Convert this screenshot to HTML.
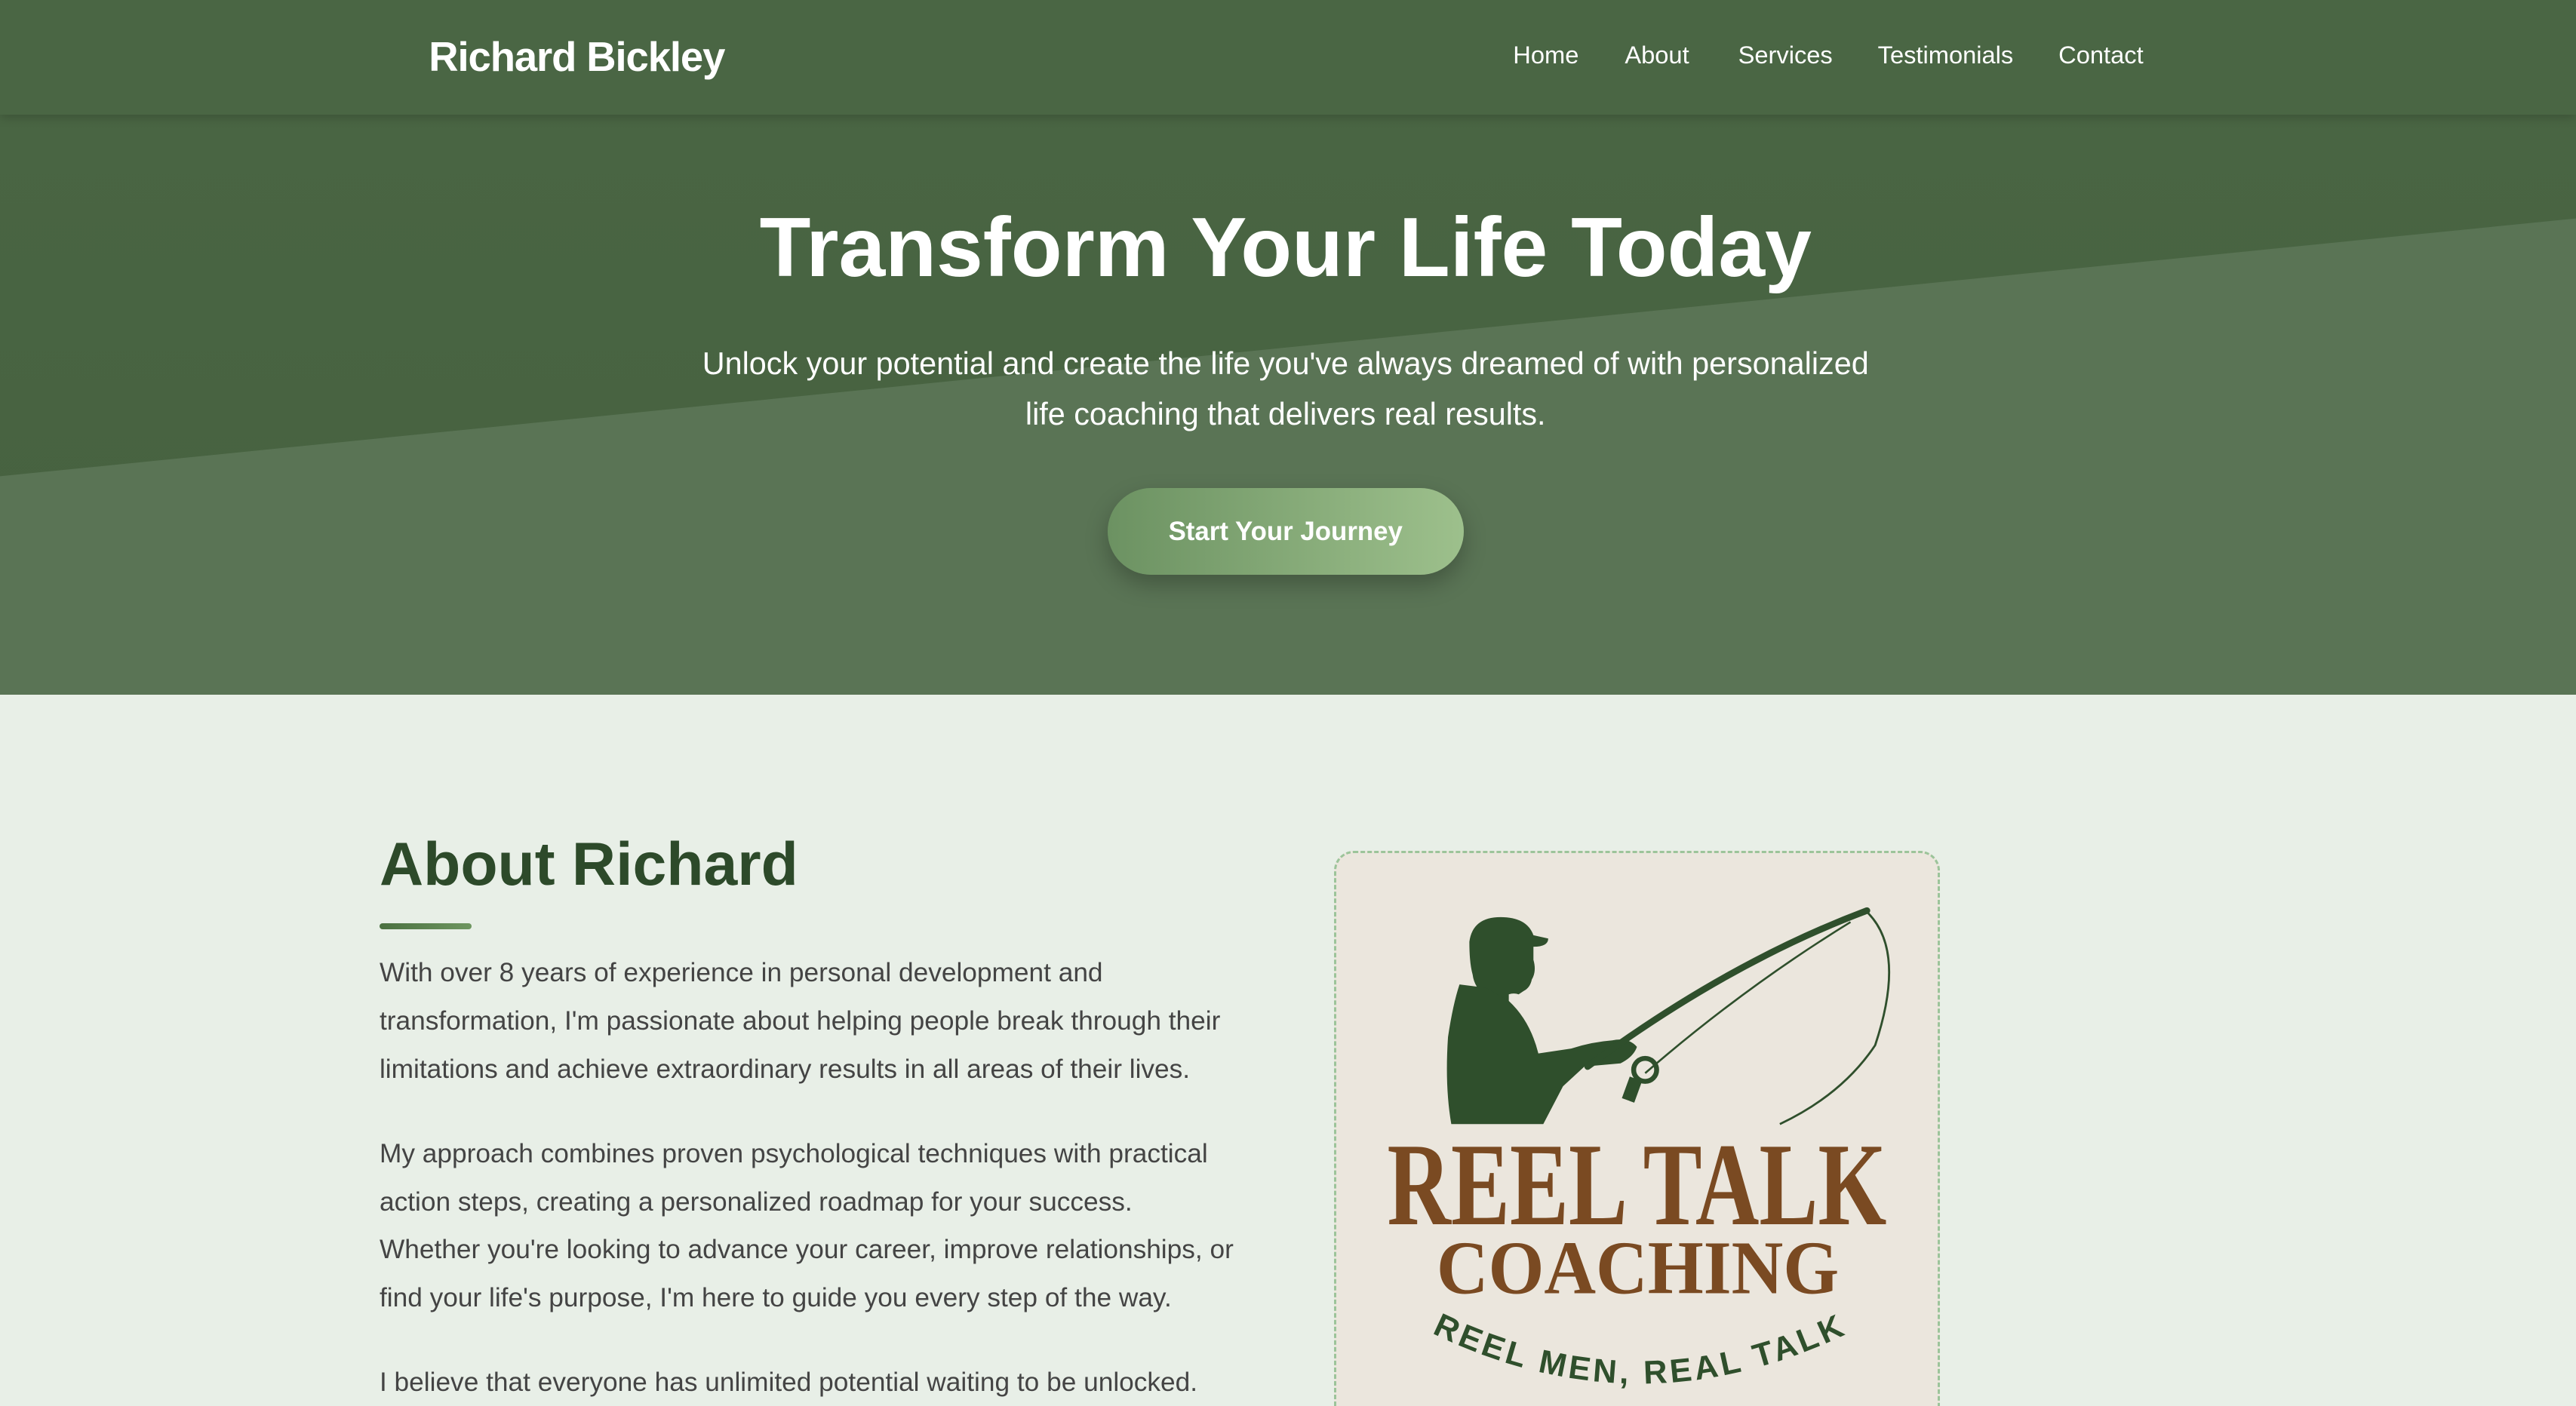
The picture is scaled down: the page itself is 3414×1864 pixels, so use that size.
<!DOCTYPE html>
<html><head><meta charset="utf-8">
<style>
html,body{margin:0;padding:0;overflow:hidden;}
html{width:3414px;height:1864px;}
body{zoom:2.17730;width:1568px;height:856px;overflow:hidden;font-family:"Liberation Sans",Arial,sans-serif;background:#e8efe7;position:relative;}
.hero{position:absolute;left:0;top:0;width:1568px;height:423px;background:linear-gradient(180deg,#4a6644,#46613f);overflow:hidden;}
.hero svg.bg{position:absolute;left:0;top:0;}
.nav{position:absolute;left:0;top:0;width:1568px;height:70px;background:#4a6644;box-shadow:0 2px 6px rgba(0,0,0,.18);z-index:2;}
.brand{position:absolute;left:261px;top:20px;color:#fff;font-weight:bold;font-size:25px;letter-spacing:-0.5px;}
.nav a{position:absolute;top:25px;color:#fff;font-size:15px;text-decoration:none;}
h1{position:absolute;left:0;width:1565px;text-align:center;top:121px;margin:0;color:#fff;font-size:51px;font-weight:bold;}
.sub{position:absolute;left:0;width:1565px;text-align:center;top:206px;color:#fff;font-size:19px;line-height:31px;}
.btn{position:absolute;left:674px;top:297px;width:217px;height:53px;border-radius:27px;background:linear-gradient(90deg,#6c9262,#9dc08c);color:#fff;font-weight:bold;font-size:16px;text-align:center;line-height:53px;box-shadow:0 6px 14px rgba(0,0,0,.25);}
h2{position:absolute;left:231px;top:505px;margin:0;font-size:37px;color:#2d4a2a;font-weight:bold;}
.bar{position:absolute;left:231px;top:562px;width:56px;height:4px;border-radius:2px;background:linear-gradient(90deg,#4a7040,#6e9660);}
.txt{position:absolute;left:231px;top:578px;width:524px;color:#444;font-size:16.2px;line-height:29.2px;}
.txt p{margin:0 0 22.5px 0;}
.card{position:absolute;left:812px;top:518px;width:366px;height:338px;border:1.5px dashed #9cc49a;border-bottom:none;border-radius:12px 12px 0 0;background:#ebe6dd;overflow:hidden;}
</style></head><body>
<div class="hero">
<svg class="bg" width="1568" height="423"><polygon points="0,290 1568,133 1568,423 0,423" fill="#5a7455"/></svg>
<h1>Transform Your Life Today</h1>
<div class="sub">Unlock your potential and create the life you've always dreamed of with personalized<br>life coaching that delivers real results.</div>
<div class="btn">Start Your Journey</div>
</div>
<div class="nav">
<div class="brand">Richard Bickley</div>
<a style="left:921px">Home</a><a style="left:989px">About</a><a style="left:1058px">Services</a><a style="left:1143px">Testimonials</a><a style="left:1253px">Contact</a>
</div>
<h2>About Richard</h2>
<div class="bar"></div>
<div class="txt">
<p>With over 8 years of experience in personal development and transformation, I'm passionate about helping people break through their limitations and achieve extraordinary results in all areas of their lives.</p>
<p>My approach combines proven psychological techniques with practical action steps, creating a personalized roadmap for your success.<br>Whether you're looking to advance your career, improve relationships, or find your life's purpose, I'm here to guide you every step of the way.</p>
<p>I believe that everyone has unlimited potential waiting to be unlocked.</p>
</div>
<div class="card">
<svg width="366" height="338" viewBox="812 518 366 338" style="position:absolute;left:0;top:0">
<g fill="#2f4f2c">
<path d="M893,572 Q895,557 912,557 Q928,557 932,568 L941,570 Q941,575 932,575 L932,583 Q934,590 931,595 Q930,600 926,602 L923,604 Q920,603 917,604 L917,612 L903,605 Q896,600 895,592 Q893,585 893,572Z"/>
<path d="M887,598 L903,600 L917,608 Q930,620 935,640 L955,637 Q967,633 980,632 Q990,630 995,636 Q993,642 985,646 L963,648 L950,660 L938,683 L882,683 Q878,660 880,630 Q883,610 887,598Z"/>
</g>
<path d="M965,648 Q1050,585 1135,553" stroke="#2f4f2c" stroke-width="4" fill="none" stroke-linecap="round"/>
<path d="M1000,652 Q1060,600 1125,560" stroke="#2f4f2c" stroke-width="1.2" fill="none"/>
<path d="M1133,552 Q1160,575 1140,635 Q1120,665 1082,683" stroke="#2f4f2c" stroke-width="1.3" fill="none"/>
<circle cx="1000" cy="650" r="7" fill="none" stroke="#2f4f2c" stroke-width="3"/>
<rect x="988" y="655" width="8" height="14" fill="#2f4f2c" transform="rotate(20 992 662)"/>
<text x="843" y="744" font-family="Liberation Serif,serif" font-weight="bold" font-size="72" fill="#7a4a22" textLength="304" lengthAdjust="spacingAndGlyphs">REEL TALK</text>
<text x="873" y="786" font-family="Liberation Serif,serif" font-weight="bold" font-size="46" fill="#7a4a22" textLength="245" lengthAdjust="spacingAndGlyphs">COACHING</text>
<defs><path id="arc" d="M874,812 Q996,870 1120,812"/></defs>
<text font-family="Liberation Sans,sans-serif" font-weight="bold" font-size="20" fill="#2f4f2c" letter-spacing="2"><textPath href="#arc" startOffset="50%" text-anchor="middle">REEL MEN, REAL TALK</textPath></text>
</svg>
</div>
</body></html>
